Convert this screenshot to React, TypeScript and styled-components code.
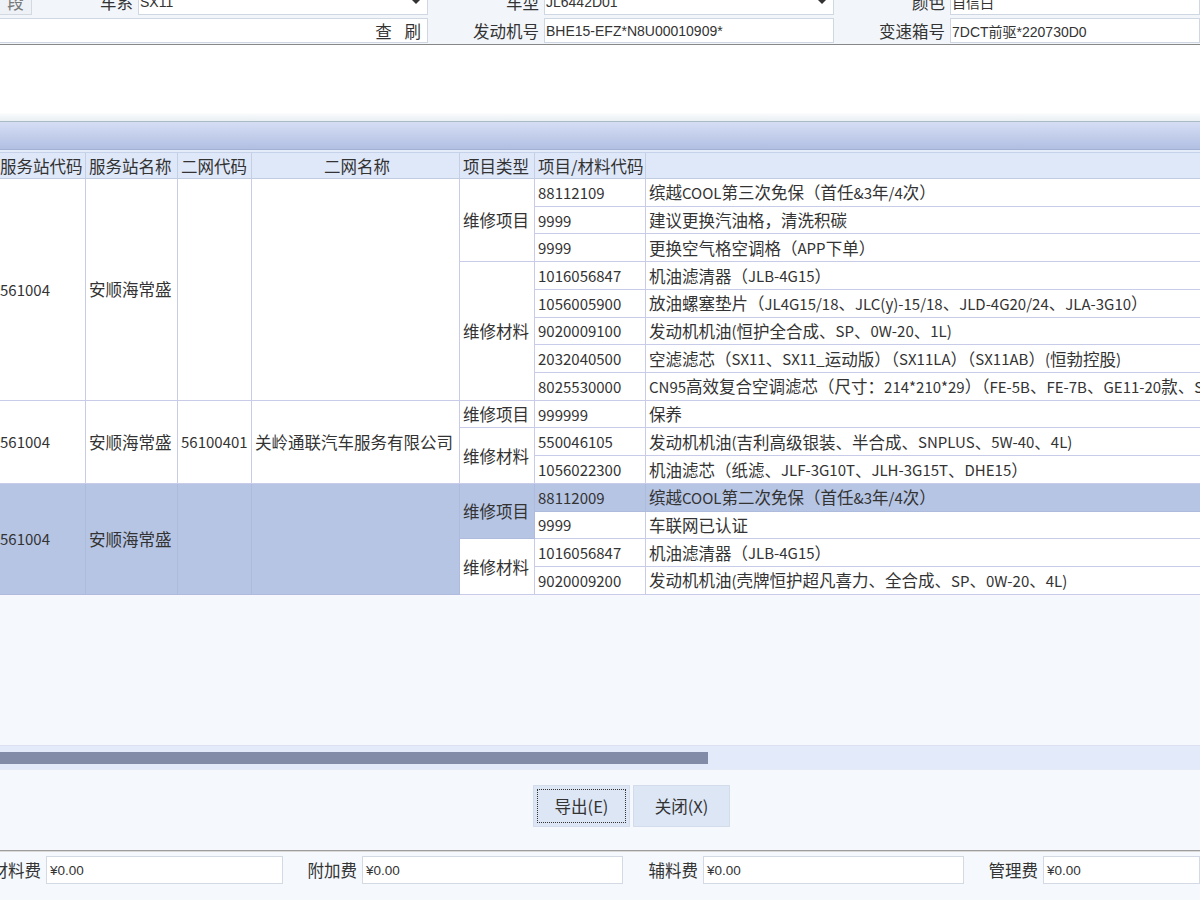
import React from 'react';
import styled, {createGlobalStyle} from 'styled-components';

const GlobalStyle = createGlobalStyle`
  html, body {
    margin: 0;
    padding: 0;
  }
  body {
    font-family: 'Noto Sans CJK SC', 'Microsoft YaHei', sans-serif;
    color: #333;
    background: #f5f8fc;
  }
`;

const Window = styled.div`
  width: 1200px;
  height: 900px;
  overflow: hidden;
  display: flex;
  flex-direction: column;
  background: #f5f9fd;
  font-size: 16.5px;
`;

/* ---------- top query form ---------- */

const TopForm = styled.div`
  height: 44px;
  flex: none;
  overflow: hidden;
  border-bottom: 1px solid #878787;
  background: #f2f6fa;
`;

const FormGrid = styled.div`
  display: grid;
  grid-template-columns: 32px 106px 290px 116px 290px 116px 1fr;
  grid-template-rows: 26px 25px;
  row-gap: 3px;
  margin-top: -11px;
`;

const FormLabel = styled.div`
  display: flex;
  align-items: center;
  justify-content: flex-end;
  padding-right: 5px;
  white-space: nowrap;
`;

const StubBox = styled.div`
  display: flex;
  align-items: center;
  justify-content: center;
  color: #777;
  background: #eef2f6;
  border: 1px solid #d2d9e1;
  border-left: none;
`;

const Field = styled.div<{$arrow?: boolean; $span?: number}>`
  position: relative;
  grid-column: span ${p => p.$span ?? 1};
  display: flex;
  align-items: center;
  padding-left: 1px;
  background: #fff;
  border: 1px solid #cfd8e2;
  font-family: 'Liberation Sans', 'Noto Sans CJK SC', sans-serif;
  font-size: 14px;
  color: #333;
  white-space: nowrap;
  overflow: hidden;

  &::after {
    content: '';
    display: ${p => (p.$arrow ? 'block' : 'none')};
    position: absolute;
    right: 7px;
    top: 10px;
    border-left: 4px solid transparent;
    border-right: 4px solid transparent;
    border-top: 4px solid #333;
  }
`;

const ActionField = styled(Field)`
  justify-content: flex-end;
  padding-right: 6px;
  border-left: none;
  font-family: 'Noto Sans CJK SC', sans-serif;
  font-size: 16.5px;
  word-spacing: 9px;
`;

/* ---------- grid panel chrome ---------- */

const BlankArea = styled.div`
  height: 68px;
  flex: none;
  background: #fff;
`;

const Fade = styled.div`
  height: 8px;
  flex: none;
  background: linear-gradient(#fbfcfd, #e9eff3);
  border-bottom: 1px solid #a9bcc5;
`;

const TitleBar = styled.div`
  height: 27px;
  flex: none;
  background: linear-gradient(#d6def4, #b1bfe2);
  border-bottom: 1px solid #a3b0d3;
`;

const HeaderGap = styled.div`
  height: 2px;
  flex: none;
  background: #e4ebf9;
  border-bottom: 1px solid #c6d1ea;
`;

/* ---------- data grid ---------- */

const DataGrid = styled.div`
  flex: none;
  width: 1400px;
  display: grid;
  grid-template-columns: 86px 92px 74px 208px 75px 111px 1fr;
  grid-template-rows: 26px repeat(15, 27.73px);
`;

const HeadCell = styled.div<{$center?: boolean; $pad?: number}>`
  display: flex;
  align-items: center;
  justify-content: ${p => (p.$center ? 'center' : 'flex-start')};
  padding-left: ${p => p.$pad ?? 3}px;
  background: #dfe8f9;
  border-right: 1px solid #c5cfe4;
  border-bottom: 1px solid #c2cce0;
  white-space: nowrap;
  overflow: hidden;
`;

const Cell = styled.div<{$rows?: number; $sel?: boolean; $pad?: number}>`
  grid-row: span ${p => p.$rows ?? 1};
  display: flex;
  align-items: center;
  min-width: 0;
  padding-left: ${p => p.$pad ?? 3}px;
  background: ${p => (p.$sel ? '#b6c5e4' : '#fff')};
  border-right: 1px solid ${p => (p.$sel ? '#aebbdc' : '#c8cce8')};
  border-bottom: 1px solid ${p => (p.$sel ? '#aebbdc' : '#c8cce8')};
  white-space: pre;
  overflow: hidden;
`;

// latin runs in the grid are set a touch smaller than the CJK text
const Latin = styled.span`
  font-size: 15px;
`;

const GridFill = styled.div`
  flex: 1;
  background: #f5f9fd;
  border-top: 1px solid #f9f8ff;
`;

const HScroll = styled.div`
  height: 25px;
  flex: none;
  box-sizing: border-box;
  display: flex;
  align-items: center;
  background: #e3eaf9;
  border-top: 1px solid #dde0f1;
  border-bottom: 1px solid #e6ebf8;
`;

const Thumb = styled.div`
  height: 12px;
  background: #838ca7;
`;

/* ---------- buttons and totals ---------- */

const ButtonBar = styled.div`
  height: 80px;
  flex: none;
  box-sizing: border-box;
  display: flex;
  justify-content: center;
  align-items: flex-start;
  gap: 3px;
  padding: 15px 0 0 63px;
  background: #f5f9fd;
`;

const Button = styled.button<{$focused?: boolean}>`
  width: 97px;
  height: 42px;
  font-family: inherit;
  font-size: 16.5px;
  color: #333;
  background: #dce6f5;
  border: 1px solid #d3dcea;
  outline: ${p => (p.$focused ? '1px dotted #333' : 'none')};
  outline-offset: -5px;
  padding: 0;
`;

const Divider = styled.div`
  height: 1px;
  flex: none;
  background: #9d9d9d;
  border-bottom: 1px solid #dadada;
`;

const Totals = styled.div`
  flex: none;
  height: 48px;
  box-sizing: border-box;
  padding-top: 4px;
  display: grid;
  grid-template-columns: 46px 237px 79px 261px 80px 261px 79px 1fr;
  grid-template-rows: 28px;
`;

const TotalLabel = styled.div`
  display: flex;
  align-items: center;
  justify-content: flex-end;
  padding-right: 5px;
  white-space: nowrap;
  min-width: 0;
`;

const TotalField = styled.div`
  display: flex;
  align-items: center;
  padding-left: 3px;
  background: #fff;
  border: 1px solid #d3dae4;
  font-family: 'Liberation Sans', sans-serif;
  font-size: 13.5px;
  color: #333;
`;

/* ---------- data ---------- */

type Item = [string, string];
interface TypeGroup {
  type: string;
  items: Item[];
}
interface Group {
  code: string;
  name: string;
  netCode: string;
  netName: string;
  selected?: number;
  types: TypeGroup[];
}

const groups: Group[] = [
  {
    code: '561004',
    name: '安顺海常盛',
    netCode: '',
    netName: '',
    types: [
      {
        type: '维修项目',
        items: [
          ['88112109', '缤越COOL第三次免保（首任&3年/4次）'],
          ['9999', '建议更换汽油格，清洗积碳'],
          ['9999', '更换空气格空调格（APP下单）'],
        ],
      },
      {
        type: '维修材料',
        items: [
          ['1016056847', '机油滤清器（JLB-4G15）'],
          ['1056005900', '放油螺塞垫片（JL4G15/18、JLC(y)-15/18、JLD-4G20/24、JLA-3G10）'],
          ['9020009100', '发动机机油(恒护全合成、SP、0W-20、1L)'],
          ['2032040500', '空滤滤芯（SX11、SX11_运动版）（SX11LA）（SX11AB）(恒勃控股)'],
          ['8025530000', 'CN95高效复合空调滤芯（尺寸：214*210*29）（FE-5B、FE-7B、GE11-20款、SX11、SX11A）'],
        ],
      },
    ],
  },
  {
    code: '561004',
    name: '安顺海常盛',
    netCode: '56100401',
    netName: '关岭通联汽车服务有限公司',
    types: [
      {type: '维修项目', items: [['999999', '保养']]},
      {
        type: '维修材料',
        items: [
          ['550046105', '发动机机油(吉利高级银装、半合成、SNPLUS、5W-40、4L)'],
          ['1056022300', '机油滤芯（纸滤、JLF-3G10T、JLH-3G15T、DHE15）'],
        ],
      },
    ],
  },
  {
    code: '561004',
    name: '安顺海常盛',
    netCode: '',
    netName: '',
    selected: 0,
    types: [
      {
        type: '维修项目',
        items: [
          ['88112009', '缤越COOL第二次免保（首任&3年/4次）'],
          ['9999', '车联网已认证'],
        ],
      },
      {
        type: '维修材料',
        items: [
          ['1016056847', '机油滤清器（JLB-4G15）'],
          ['9020009200', '发动机机油(壳牌恒护超凡喜力、全合成、SP、0W-20、4L)'],
        ],
      },
    ],
  },
];

function mixed(text: string) {
  return text
    .split(/([\x20-\x7e]+)/)
    .filter(Boolean)
    .map((part, i) =>
      /^[\x20-\x7e]+$/.test(part) ? <Latin key={i}>{part}</Latin> : part,
    );
}

function renderGroup(g: Group, gi: number) {
  const total = g.types.reduce((n, t) => n + t.items.length, 0);
  const groupSel = g.selected !== undefined;
  const cells: React.ReactNode[] = [];
  let row = 0;
  g.types.forEach((t, ti) => {
    const typeSel = groupSel && g.selected! >= row && g.selected! < row + t.items.length;
    t.items.forEach(([code, desc], ii) => {
      const key = `${gi}-${ti}-${ii}`;
      const rowSel = groupSel && g.selected === row;
      if (row === 0) {
        cells.push(
          <Cell key={key + 'a'} $rows={total} $sel={groupSel} $pad={0}>{mixed(g.code)}</Cell>,
          <Cell key={key + 'b'} $rows={total} $sel={groupSel}>{g.name}</Cell>,
          <Cell key={key + 'c'} $rows={total} $sel={groupSel}>{mixed(g.netCode)}</Cell>,
          <Cell key={key + 'd'} $rows={total} $sel={groupSel}>{g.netName}</Cell>,
        );
      }
      if (ii === 0) {
        cells.push(
          <Cell key={key + 'e'} $rows={t.items.length} $sel={typeSel}>{t.type}</Cell>,
        );
      }
      cells.push(
        <Cell key={key + 'f'} $sel={rowSel}>{mixed(code)}</Cell>,
        <Cell key={key + 'g'} $sel={rowSel}>{mixed(desc)}</Cell>,
      );
      row++;
    });
  });
  return cells;
}

export default function App() {
  return (
    <Window>
      <GlobalStyle />
      <TopForm>
        <FormGrid>
          <StubBox>段</StubBox>
          <FormLabel>车系</FormLabel>
          <Field $arrow>SX11</Field>
          <FormLabel>车型</FormLabel>
          <Field $arrow>JL6442D01</Field>
          <FormLabel>颜色</FormLabel>
          <Field>自信白</Field>

          <ActionField $span={3}>查 刷</ActionField>
          <FormLabel>发动机号</FormLabel>
          <Field>BHE15-EFZ*N8U00010909*</Field>
          <FormLabel>变速箱号</FormLabel>
          <Field>7DCT前驱*220730D0</Field>
        </FormGrid>
      </TopForm>

      <BlankArea />
      <Fade />
      <TitleBar />
      <HeaderGap />

      <DataGrid>
        <HeadCell $pad={0}>服务站代码</HeadCell>
        <HeadCell>服务站名称</HeadCell>
        <HeadCell>二网代码</HeadCell>
        <HeadCell $center>二网名称</HeadCell>
        <HeadCell>项目类型</HeadCell>
        <HeadCell>项目/材料代码</HeadCell>
        <HeadCell />
        {groups.map(renderGroup)}
      </DataGrid>
      <GridFill />

      <HScroll>
        <Thumb style={{width: 708}} />
      </HScroll>

      <ButtonBar>
        <Button $focused>导出(E)</Button>
        <Button>关闭(X)</Button>
      </ButtonBar>

      <Divider />
      <Totals>
        <TotalLabel>材料费</TotalLabel>
        <TotalField>¥0.00</TotalField>
        <TotalLabel>附加费</TotalLabel>
        <TotalField>¥0.00</TotalField>
        <TotalLabel>辅料费</TotalLabel>
        <TotalField>¥0.00</TotalField>
        <TotalLabel>管理费</TotalLabel>
        <TotalField>¥0.00</TotalField>
      </Totals>
    </Window>
  );
}
